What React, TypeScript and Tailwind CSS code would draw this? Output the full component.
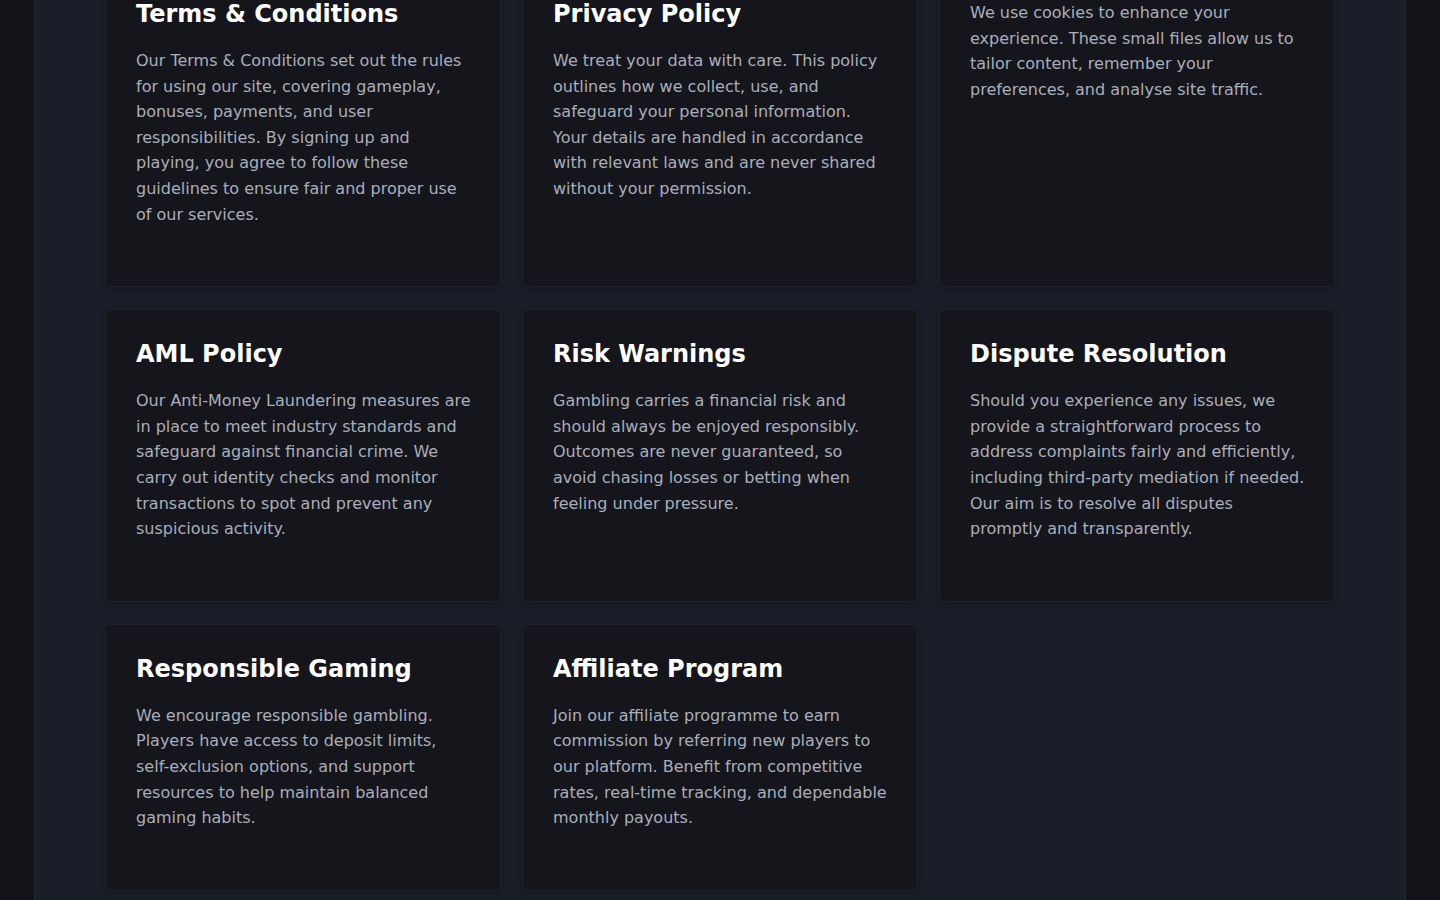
import React from 'react';

const policies = [
  {
    title: 'Terms & Conditions',
    body: 'Our Terms & Conditions set out the rules for using our site, covering gameplay, bonuses, payments, and user responsibilities. By signing up and playing, you agree to follow these guidelines to ensure fair and proper use of our services.',
  },
  {
    title: 'Privacy Policy',
    body: 'We treat your data with care. This policy outlines how we collect, use, and safeguard your personal information. Your details are handled in accordance with relevant laws and are never shared without your permission.',
  },
  {
    title: 'Cookie Policy',
    body: 'We use cookies to enhance your experience. These small files allow us to tailor content, remember your preferences, and analyse site traffic.',
  },
  {
    title: 'AML Policy',
    body: 'Our Anti-Money Laundering measures are in place to meet industry standards and safeguard against financial crime. We carry out identity checks and monitor transactions to spot and prevent any suspicious activity.',
  },
  {
    title: 'Risk Warnings',
    body: 'Gambling carries a financial risk and should always be enjoyed responsibly. Outcomes are never guaranteed, so avoid chasing losses or betting when feeling under pressure.',
  },
  {
    title: 'Dispute Resolution',
    body: 'Should you experience any issues, we provide a straightforward process to address complaints fairly and efficiently, including third-party mediation if needed. Our aim is to resolve all disputes promptly and transparently.',
  },
  {
    title: 'Responsible Gaming',
    body: 'We encourage responsible gambling. Players have access to deposit limits, self-exclusion options, and support resources to help maintain balanced gaming habits.',
  },
  {
    title: 'Affiliate Program',
    body: 'Join our affiliate programme to earn commission by referring new players to our platform. Benefit from competitive rates, real-time tracking, and dependable monthly payouts.',
  },
];

export default function App() {
  return (
    <main
      className="h-[900px] overflow-hidden bg-[#131419]"
      style={{ fontFamily: '"DejaVu Sans", Verdana, sans-serif' }}
    >
      <div className="mx-[34px] -mt-[61px] min-h-[1000px] bg-[#1a1e28] border border-[#232733] px-[70px] pt-[29px]">
        {/* Policy cards */}
        <div className="grid grid-cols-3 gap-x-[21px] gap-y-[22px]">
          {policies.map((p, i) => (
            <div
              key={i}
              className="bg-[#15161c] border border-[#1f222b] rounded-[4px] shadow-[0_2px_6px_rgba(0,0,0,0.25)] pt-[28px] pl-[30px] pr-[28px] pb-[59px]"
            >
              <div className={i === 2 ? '-mt-[48px]' : ''}>
                <h3 className="text-[24px] leading-[32px] font-bold text-white mb-[18px]">{p.title}</h3>
                <p className="text-[16px] leading-[25.6px] text-[#a9aebb]">{p.body}</p>
              </div>
            </div>
          ))}
        </div>
      </div>
    </main>
  );
}
